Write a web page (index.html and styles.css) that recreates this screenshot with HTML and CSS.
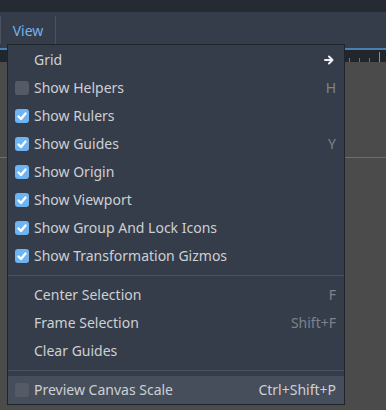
FILE: index.html
```html
<!DOCTYPE html>
<html>

<head>
  <title>View menu</title>
  <link rel="stylesheet" href="styles.css">
</head>

<body>

  <div class="barre-haut"></div>

  <div class="outils">
    <div class="separateur"></div>
    <div class="bouton-menu">View</div>
    <div class="separateur"></div>
  </div>

  <div class="zone">
    <div class="ligne-bleue"></div>
    <div class="regle"></div>
    <div class="canvas">
      <div class="guide"></div>
    </div>
  </div>

  <!-- Menu déroulant au-dessus du canvas -->
  <div class="popup">
    <div class="item">
      <span class="case-vide"></span>
      <span class="libelle">Grid</span>
      <svg class="fleche" width="10" height="10" viewBox="0 0 10 10">
        <path d="M1 5 H8 M5 1.5 L8.5 5 L5 8.5" fill="none" stroke="#eef0f2" stroke-width="2" stroke-linecap="round" stroke-linejoin="round"/>
      </svg>
    </div>
    <div class="item">
      <span class="case"></span>
      <span class="libelle">Show Helpers</span>
      <span class="raccourci">H</span>
    </div>
    <div class="item">
      <span class="case cochee"></span>
      <span class="libelle">Show Rulers</span>
    </div>
    <div class="item">
      <span class="case cochee"></span>
      <span class="libelle">Show Guides</span>
      <span class="raccourci">Y</span>
    </div>
    <div class="item">
      <span class="case cochee"></span>
      <span class="libelle">Show Origin</span>
    </div>
    <div class="item">
      <span class="case cochee"></span>
      <span class="libelle">Show Viewport</span>
    </div>
    <div class="item">
      <span class="case cochee"></span>
      <span class="libelle">Show Group And Lock Icons</span>
    </div>
    <div class="item">
      <span class="case cochee"></span>
      <span class="libelle">Show Transformation Gizmos</span>
    </div>

    <div class="trait"></div>

    <div class="item">
      <span class="case-vide"></span>
      <span class="libelle">Center Selection</span>
      <span class="raccourci">F</span>
    </div>
    <div class="item">
      <span class="case-vide"></span>
      <span class="libelle">Frame Selection</span>
      <span class="raccourci">Shift+F</span>
    </div>
    <div class="item">
      <span class="case-vide"></span>
      <span class="libelle">Clear Guides</span>
    </div>

    <div class="trait"></div>

    <div class="item survol">
      <span class="case"></span>
      <span class="libelle">Preview Canvas Scale</span>
      <span class="raccourci clair">Ctrl+Shift+P</span>
    </div>
  </div>

</body>

</html>
```

FILE: styles.css
```css
body {
  margin: 0;
  width: 386px;
  height: 410px;
  overflow: hidden;
  background: #4b4b4b;
  font-family: "Noto Sans", sans-serif;
  font-size: 14px;
  position: relative;
}

.barre-haut {
  height: 12px;
  background: #252a33;
}

.outils {
  height: 36px;
  background: #363d4a;
  display: flex;
  align-items: center;
}

.separateur {
  width: 1px;
  height: 28px;
  background: #4a5160;
}

.bouton-menu {
  width: 54px;
  text-align: center;
  color: #72b2ea;
}

.ligne-bleue {
  height: 2px;
  background: #4a7fb3;
}

.regle {
  height: 12px;
  background: #21252c;
  /* petites graduations tous les 10px, une grande à droite */
  background-image:
    linear-gradient(#8a8f98, #8a8f98),
    repeating-linear-gradient(90deg, transparent 0 9px, #6b7079 9px 10px);
  background-size: 1px 10px, 100% 4px;
  background-position: 379px 2px, 340px 8px;
  background-repeat: no-repeat, no-repeat;
}

.canvas {
  height: 348px;
  background: #4b4b4b;
  padding-top: 95px;
  box-sizing: border-box;
}

.guide {
  height: 1px;
  background: #9a4f9a;
}

.popup {
  position: absolute;
  left: 7px;
  top: 44px;
  width: 336px;
  padding: 1px 0 0;
  background: #363d4a;
  border: 1px solid #1f242b;
  display: flex;
  flex-direction: column;
}

.item {
  height: 28px;
  display: flex;
  align-items: center;
  gap: 5px;
  padding: 0 8px 0 7px;
  color: #cdd0d4;
  line-height: 26px;
}

.item.survol {
  background: #474e5b;
}

.case,
.case-vide {
  width: 14px;
  height: 14px;
  flex: none;
  border-radius: 3px;
}

.case {
  background: #555b66;
}

.case.cochee {
  background: #6fb4f2;
  background-image: url("data:image/svg+xml,%3Csvg xmlns='http://www.w3.org/2000/svg' width='14' height='14'%3E%3Cpath d='M3.5 7.5 L6 10 L10.5 4.5' fill='none' stroke='white' stroke-width='2.4' stroke-linecap='round' stroke-linejoin='round'/%3E%3C/svg%3E");
}

.libelle {
  flex: 1;
  padding-bottom: 1px;
}

.raccourci {
  color: #7d828b;
  padding-bottom: 1px;
}

.raccourci.clair {
  color: #cdd0d4;
}

.fleche {
  flex: none;
  margin-right: 2px;
}

.trait {
  height: 1px;
  margin: 5px 0;
  background: #4a5161;
}
```
